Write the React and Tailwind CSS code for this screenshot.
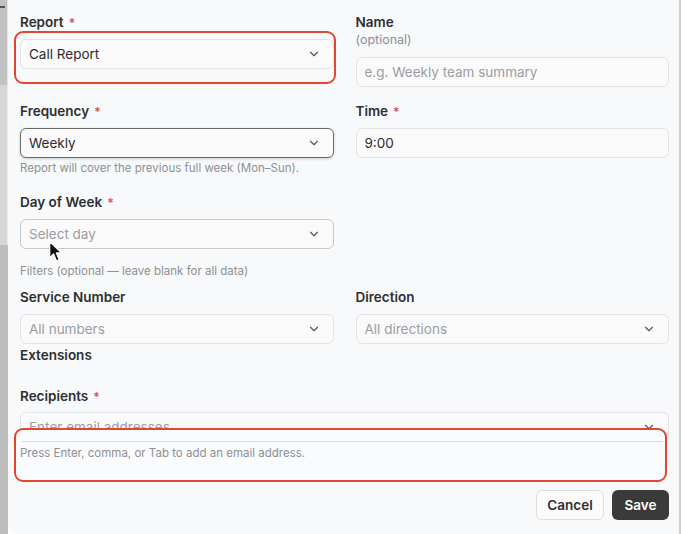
import { ChevronDown } from 'lucide-react'

function Label({ children, required }) {
  return (
    <div className="h-[18px] text-[13.5px] leading-[18px] font-semibold text-[#2e2e30]">
      {children}
      {required && <span className="text-[#d9534f] ml-[5px] text-[12px] leading-none">*</span>}
    </div>
  )
}

function Select({ value, placeholder, tone = 'default' }) {
  const border =
    tone === 'focus'
      ? 'border-[#6a6a6a] shadow-[0_1px_3px_rgba(0,0,0,0.18)]'
      : tone === 'hover'
        ? 'border-[#c8cacf]'
        : 'border-[#e1e3e7]'
  return (
    <div className={`h-[30px] flex items-center justify-between px-2 rounded-md border bg-[#fafafb] ${border}`}>
      <span className={`text-[13.5px] ${value ? 'text-[#2b2b2d]' : 'text-[#9b9da1]'}`}>{value || placeholder}</span>
      <ChevronDown size={14} strokeWidth={2} className="text-[#55575b] mr-1" />
    </div>
  )
}

function Input({ value, placeholder }) {
  return (
    <div className="h-[30px] flex items-center px-2 rounded-md border border-[#e1e3e7] bg-[#fafafb]">
      <span className={`text-[13.5px] ${value ? 'text-[#2b2b2d]' : 'text-[#9b9da1]'}`}>{value || placeholder}</span>
    </div>
  )
}

function Hint({ children, className = '' }) {
  return <div className={`text-[11.5px] leading-[16px] text-[#8e9094] ${className}`}>{children}</div>
}

export default function App() {
  return (
    <div className="w-[685px] h-[534px] flex bg-white overflow-hidden" style={{ fontFamily: 'Inter, "Noto Sans", sans-serif' }}>
      {/* backdrop strip */}
      <div className="w-[8px] flex flex-col">
        <div className="h-[85px] bg-[#c2c2c2] border-r border-[#e4e4e4] pt-[6px]">
          <div className="w-[5px] h-[2px] bg-[#555]" />
        </div>
        <div className="h-[160px] bg-[#d6d6d6] border-r border-[#e8e8e8]" />
        <div className="flex-1 bg-[#bdbdbd]" />
      </div>

      <div className="w-[673px] bg-[#f8f9fa] border-r-2 border-[#cfd0d2] rounded-bl-[10px] pl-3 pr-[10px] pt-[13px]">
        {/* Report / Name */}
        <div className="grid grid-cols-2 gap-x-[22px]">
          <div className="relative">
            <Label required>Report</Label>
            <div className="mt-2 relative">
              <Select value="Call Report" />
              <div className="absolute -left-[6px] -top-[8px] -right-[2px] -bottom-[15px] rounded-[9px] border-2 border-[#e4452e]" />
            </div>
          </div>
          <div>
            <Label>Name</Label>
            <div className="text-[12.5px] leading-[18px] text-[#8e9094]">(optional)</div>
            <div className="mt-2">
              <Input placeholder="e.g. Weekly team summary" />
            </div>
          </div>
        </div>

        {/* Frequency / Time */}
        <div className="grid grid-cols-2 gap-x-[22px] mt-[15px]">
          <div>
            <Label required>Frequency</Label>
            <div className="mt-2">
              <Select value="Weekly" tone="focus" />
            </div>
            <Hint className="mt-0.5">Report will cover the previous full week (Mon–Sun).</Hint>
          </div>
          <div>
            <Label required>Time</Label>
            <div className="mt-2">
              <Input value="9:00" />
            </div>
          </div>
        </div>

        {/* Day of Week */}
        <div className="grid grid-cols-2 gap-x-[22px] mt-[17px]">
          <div className="relative">
            <Label required>Day of Week</Label>
            <div className="mt-2">
              <Select placeholder="Select day" tone="hover" />
            </div>
            <svg className="absolute left-[28px] top-[47px]" width="17" height="23" viewBox="0 0 16 22">
              <path d="M1.5 1.5 L1.5 17 L5.2 13.4 L8 20 L10.6 18.9 L7.9 12.4 L13 12.4 Z" fill="#111" stroke="#fff" strokeWidth="1.2" strokeLinejoin="round" />
            </svg>
          </div>
        </div>

        <Hint className="mt-[14px]">Filters (optional — leave blank for all data)</Hint>

        {/* Service Number / Direction */}
        <div className="grid grid-cols-2 gap-x-[22px] mt-[9px]">
          <div>
            <Label>Service Number</Label>
            <div className="mt-2">
              <Select placeholder="All numbers" />
            </div>
          </div>
          <div>
            <Label>Direction</Label>
            <div className="mt-2">
              <Select placeholder="All directions" />
            </div>
          </div>
        </div>

        <div className="mt-[2px]">
          <Label>Extensions</Label>
        </div>

        {/* Recipients */}
        <div className="mt-[23px]">
          <Label required>Recipients</Label>
          <div className="relative mt-[7px]">
            <Select placeholder="Enter email addresses" />
            <div className="absolute -left-[6px] top-[16px] right-[2px] h-[54px] rounded-[9px] border-2 border-[#e4452e] bg-[#fafbfc] z-10">
              <div className="ml-[6px] mr-[2px] mt-[11px] border-t border-[#d9dbde]" />
            </div>
            <Hint className="relative z-20 mt-[3px]">Press Enter, comma, or Tab to add an email address.</Hint>
          </div>
        </div>

        {/* Actions */}
        <div className="flex justify-end gap-2 mt-[29px]">
          <button className="h-[30px] w-[68px] rounded-md border border-[#dcdde0] bg-[#fbfbfc] text-[13.5px] font-semibold text-[#2e2e30]">
            Cancel
          </button>
          <button className="h-[30px] w-[57px] rounded-md bg-[#3a3a3a] text-[13.5px] font-semibold text-white">
            Save
          </button>
        </div>
      </div>

      <div className="flex-1 bg-white" />
    </div>
  )
}
